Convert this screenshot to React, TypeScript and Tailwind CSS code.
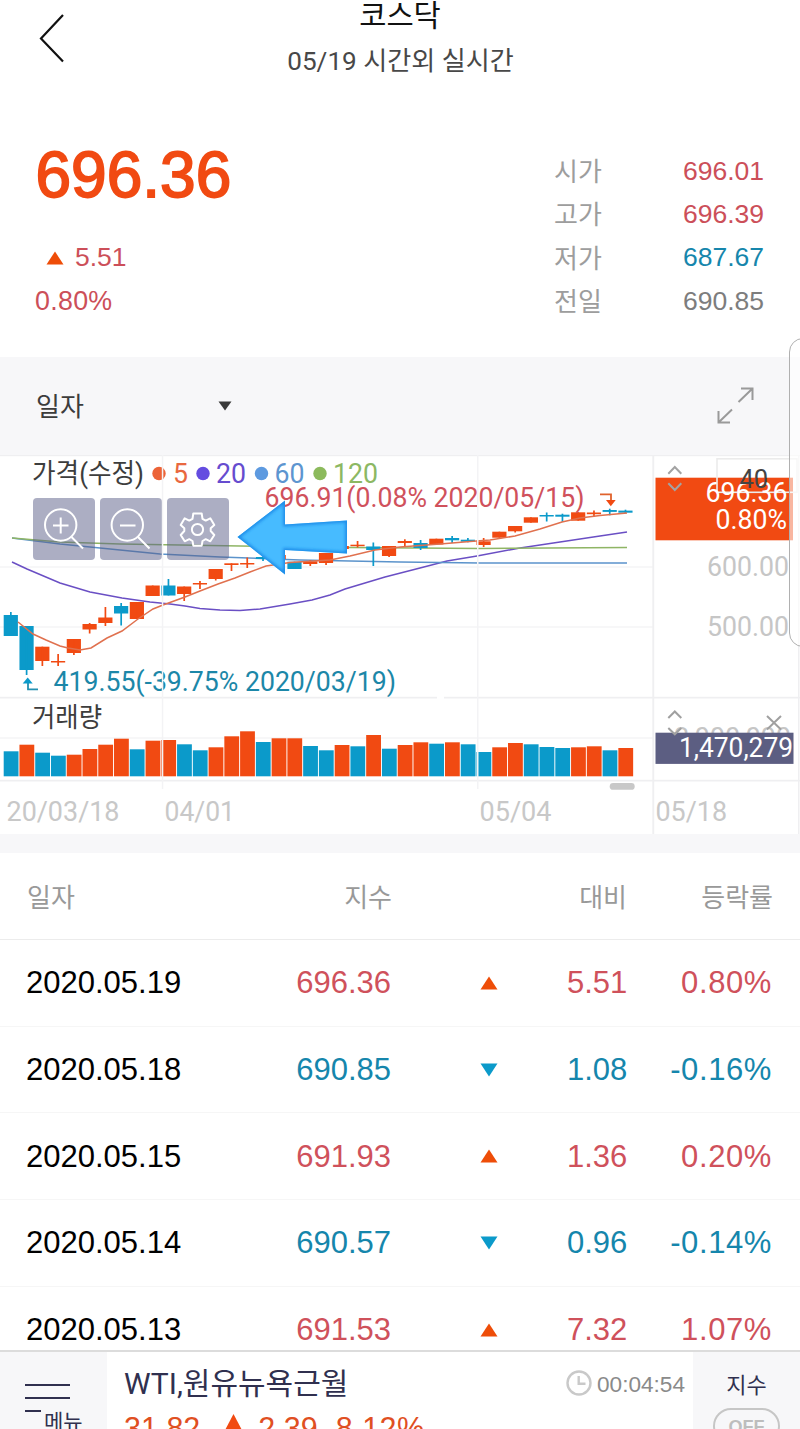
import React from 'react'

const RED = '#f14a12'
const BLUE = '#0b9aca'

type Candle = {
  up: boolean
  top: number
  bottom: number
  high?: number
  low?: number
  vol: number
}

// y values are in page pixels, vol is the top edge of the volume bar
const candles: Candle[] = [
  { up: false, top: 615, bottom: 636, high: 612, vol: 751.3 },
  { up: false, top: 626, bottom: 670, low: 675, vol: 744.7 },
  { up: true, top: 646.7, bottom: 661, low: 666, vol: 752.7 },
  { up: true, top: 661, bottom: 662.5, high: 654, low: 666, vol: 755.7 },
  { up: true, top: 639, bottom: 653, low: 655, vol: 754.7 },
  { up: true, top: 624, bottom: 629.5, high: 623, low: 633.5, vol: 749 },
  { up: true, top: 617.5, bottom: 623, high: 607, low: 626, vol: 744.7 },
  { up: false, top: 606, bottom: 613.5, high: 603, low: 625.5, vol: 738.7 },
  { up: true, top: 602, bottom: 619, vol: 749.3 },
  { up: true, top: 585.5, bottom: 596, vol: 740.7 },
  { up: false, top: 585.5, bottom: 595.5, high: 579, vol: 740 },
  { up: true, top: 586.5, bottom: 594, low: 601, vol: 744.3 },
  { up: true, top: 583, bottom: 584.5, high: 581, low: 589, vol: 750.3 },
  { up: true, top: 569, bottom: 579, low: 580.5, vol: 747.3 },
  { up: true, top: 563.3, bottom: 565, low: 571, vol: 736.3 },
  { up: true, top: 563, bottom: 564.5, high: 557.5, low: 568, vol: 731.3 },
  { up: false, top: 557, bottom: 559, high: 555, low: 561, vol: 742 },
  { up: true, top: 555, bottom: 559, vol: 738.3 },
  { up: false, top: 561.7, bottom: 569, vol: 738.3 },
  { up: true, top: 561.3, bottom: 564, high: 560.3, low: 566, vol: 746 },
  { up: true, top: 553, bottom: 563, low: 565, vol: 750.3 },
  { up: true, top: 546, bottom: 549, vol: 745 },
  { up: true, top: 544.7, bottom: 546.2, high: 541, low: 547.5, vol: 746.3 },
  { up: false, top: 546.5, bottom: 550, high: 542.5, low: 566, vol: 735 },
  { up: true, top: 546, bottom: 556, low: 557, vol: 748.7 },
  { up: true, top: 541, bottom: 543, high: 539.3, low: 546, vol: 745 },
  { up: false, top: 543, bottom: 548, high: 540, low: 550, vol: 742.3 },
  { up: true, top: 538.7, bottom: 544.5, vol: 743.7 },
  { up: false, top: 538, bottom: 540.3, high: 536, low: 543, vol: 742.3 },
  { up: false, top: 539.7, bottom: 541.7, high: 538, low: 542.3, vol: 744.3 },
  { up: true, top: 541.3, bottom: 545, high: 538, low: 547, vol: 752 },
  { up: true, top: 531.7, bottom: 537.7, vol: 747.3 },
  { up: true, top: 526, bottom: 531.3, low: 532.5, vol: 743 },
  { up: true, top: 517.3, bottom: 522.7, vol: 744.3 },
  { up: false, top: 515, bottom: 516.5, high: 512.5, low: 521.5, vol: 747 },
  { up: false, top: 514.7, bottom: 516.7, high: 513.7, low: 522, vol: 748 },
  { up: true, top: 512.3, bottom: 520.7, vol: 747.3 },
  { up: true, top: 512.5, bottom: 514.2, high: 510.5, low: 516.7, vol: 746.3 },
  { up: false, top: 510, bottom: 511.9, high: 508.7, low: 515.3, vol: 750.3 },
  { up: false, top: 510.6, bottom: 512.7, high: 509.7, low: 513.3, vol: 748 },
]

const volumeDown = [0, 2, 3, 8, 11, 12, 16, 19, 20, 22, 24, 27, 29, 30, 33, 34, 35, 38]

const averages = [
  {
    color: '#e0714f',
    points:
      '18,622 33,634 46,640 60,646 68,648 80,650 91,648 107,638 122,631 138,619 153,609 163,605 185,597 200,591 218,584 235,578 250,572 266,566 290,562.5 330,560 350,556 375,550 400,547 440,544 470,541.5 490,540 515,536 540,529 562,522 580,518 600,515.5 627,513',
  },
  {
    color: '#6a4fc4',
    points:
      '12,562 27,569 60,583 90,592 122,598 150,602 170,604 185,606 200,608.5 220,610 240,610.5 260,609 290,604 312,600 330,595 345,589 385,577 420,568 447,561 477,556 520,548 560,542 600,536 627,532',
  },
  {
    color: '#5b93cb',
    points: '12,538 60,544 100,548 160,554 220,557 300,560 400,562 480,563 627,563',
  },
  {
    color: '#8fb565',
    points: '12,538 60,542 120,544 240,546 350,547.5 480,548.5 627,547.5',
  },
]

const quotes = [
  { label: '시가', value: '696.01', color: 'text-[#cc4f59]' },
  { label: '고가', value: '696.39', color: 'text-[#cc4f59]' },
  { label: '저가', value: '687.67', color: 'text-[#1686ac]' },
  { label: '전일', value: '690.85', color: 'text-[#7d7d7d]' },
]

const rows = [
  { date: '2020.05.19', index: '696.36', up: true, diff: '5.51', rate: '0.80%' },
  { date: '2020.05.18', index: '690.85', up: false, diff: '1.08', rate: '-0.16%' },
  { date: '2020.05.15', index: '691.93', up: true, diff: '1.36', rate: '0.20%' },
  { date: '2020.05.14', index: '690.57', up: false, diff: '0.96', rate: '-0.14%' },
  { date: '2020.05.13', index: '691.53', up: true, diff: '7.32', rate: '1.07%' },
]

function Triangle({ up }: { up: boolean }) {
  return (
    <svg width="18" height="14" viewBox="0 0 18 14">
      {up ? <path d="M9 0.5L17.5 13.5H0.5Z" fill="#ee4d08" /> : <path d="M9 13.5L17.5 0.5H0.5Z" fill={BLUE} />}
    </svg>
  )
}

function Header() {
  return (
    <header className="h-[357px] bg-white">
      <div className="grid h-[80px] grid-cols-[100px_600px_100px]">
        <div className="pt-[14px] pl-[39px]">
          <svg width="26" height="49" viewBox="0 0 26 49" fill="none" stroke="#111" strokeWidth="2.2">
            <path d="M24 1L2 24.5L24 47.5" />
          </svg>
        </div>
        <div className="text-center">
          <h1 className="h-8 text-[29.6px] leading-8 text-[#111]">코스닥</h1>
          <p className="mt-[13px] h-8 pl-px text-[26.1px] leading-8 text-[#484848]">05/19 시간외 실시간</p>
        </div>
      </div>

      <div className="flex justify-between pr-[36px] pl-[35px] font-['Liberation_Sans','Noto_Sans_CJK_KR',sans-serif]">
        <div className="pt-[63px]">
          <div className="h-16 pl-[0.5px] text-[64px] leading-16 text-[#f14a12] [-webkit-text-stroke:1.8px_#f14a12]">
            696.36
          </div>
          <div className="mt-[29px] flex h-[43px] items-center pl-[11px] text-[26.5px] text-[#cc4f59]">
            <Triangle up />
            <span className="ml-[11px]">5.51</span>
          </div>
          <div className="h-[43px] text-[26.8px] leading-[45px] tracking-[0.3px] text-[#cc4f59]">0.80%</div>
        </div>
        <dl className="w-[210px] pt-[70px]">
          {quotes.map((q) => (
            <div key={q.label} className="flex h-[43.3px] items-center justify-between text-[26.5px]">
              <dt className="pt-[2px] text-[26px] text-[#9d9d9d]">{q.label}</dt>
              <dd className={q.color}>{q.value}</dd>
            </div>
          ))}
        </dl>
      </div>
    </header>
  )
}

function Toolbar() {
  return (
    <div className="flex h-[98px] items-center justify-between bg-[#f7f7f9] pr-[46px] pl-[36px]">
      <div className="flex w-[196px] items-center justify-between">
        <span className="pt-[2px] text-[26px] leading-8 text-[#3c3c3c]">일자</span>
        <svg width="14" height="10" viewBox="0 0 14 10">
          <path d="M0.5 0.5H13.5L7 9.5Z" fill="#3a3a3a" />
        </svg>
      </div>
      <svg className="-mt-[2px]" width="37" height="37" viewBox="0 0 37 37" fill="none" stroke="#9a9a9a" strokeWidth="2">
        <path d="M21.5 15L35.5 1.5M24 1.5H35.5V13" />
        <path d="M15 22.5L1.5 35.5M1.5 24V35.5H13" />
      </svg>
    </div>
  )
}

interface LabelProps {
  x: number
  y: number
  w: number
  fill: string
  children: string
}

function Label({ x, y, w, fill, children }: LabelProps) {
  return (
    <text x={x} y={y} textLength={w} lengthAdjust="spacingAndGlyphs" fontSize="27" fill={fill}>
      {children}
    </text>
  )
}

function ZoomButtons() {
  return (
    <div className="absolute top-[43px] left-[33px] flex gap-[5px]">
      <button className="h-[62px] w-[62px] rounded-[4px] bg-[#5a5e87]/50">
        <svg width="62" height="62" viewBox="0 0 62 62" fill="none" stroke="#fff" strokeWidth="2">
          <circle cx="27.7" cy="27" r="15.7" />
          <path d="M20 27.5H35.5M27.7 19.5V35.5M38.5 39L50 50.5" />
        </svg>
      </button>
      <button className="h-[62px] w-[62px] rounded-[4px] bg-[#5a5e87]/50">
        <svg width="62" height="62" viewBox="0 0 62 62" fill="none" stroke="#fff" strokeWidth="2">
          <circle cx="27.3" cy="27" r="15.7" />
          <path d="M20 27.5H35.5M38 39L49.5 50.5" />
        </svg>
      </button>
      <button className="h-[62px] w-[62px] rounded-[4px] bg-[#5a5e87]/50">
        <svg width="62" height="62" viewBox="0 0 62 62" fill="none" stroke="#fff" strokeWidth="2" strokeLinejoin="round">
          <circle cx="30.5" cy="31.5" r="5.6" />
          <path d="M26.3 15.5H34.7L35.5 20.8L38.7 22.6L43.3 20.3L47.3 27L43.7 30.2V33L47.3 37L43.3 43.3L38.7 41.2L35.5 43L34.7 47.7H26.3L25.5 43L22.3 41.2L17.7 43.3L13.7 37L17.3 33V30.2L13.7 27L17.7 20.3L22.3 22.6L25.5 20.8Z" />
        </svg>
      </button>
    </div>
  )
}

function Chart() {
  return (
    <section className="relative h-[379px] bg-white">
      <svg
        className="block font-['Roboto','Noto_Sans_CJK_KR',sans-serif]"
        width="800"
        height="379"
        viewBox="0 455 800 379"
      >
        <defs>
          <clipPath id="pointer">
            <path d="M237.5 537L285 500.5V524.5L347 520.5V553.5L285 550V574.5Z" />
          </clipPath>
          <filter id="soft" x="-20%" y="-20%" width="140%" height="140%">
            <feGaussianBlur stdDeviation="1.8" />
          </filter>
        </defs>

        {/* horizontal grid */}
        <g fill="#f4f4f5">
          <rect x="0" y="566.3" width="653" height="1.4" />
          <rect x="0" y="626.3" width="653" height="1.4" />
          <rect x="0" y="737.3" width="653" height="1.4" />
        </g>

        {/* moving averages */}
        {averages.slice(1).map((a) => (
          <polyline key={a.color} points={a.points} fill="none" stroke={a.color} strokeWidth="1.5" />
        ))}

        {/* candles */}
        {candles.map((c, i) => {
          const x = 3.7 + i * 15.76
          const fill = c.up ? RED : BLUE
          const high = c.high ?? c.top
          const low = c.low ?? c.bottom
          return (
            <g key={i} fill={fill}>
              <rect x={x} y={c.top} width="14.2" height={c.bottom - c.top} />
              <rect x={x + 6.3} y={high} width="1.7" height={low - high} />
            </g>
          )
        })}
        <polyline points={averages[0].points} fill="none" stroke={averages[0].color} strokeWidth="1.5" />

        {/* volume */}
        {candles.map((c, i) => (
          <rect
            key={i}
            x={3.7 + i * 15.76}
            y={c.vol}
            width="14.8"
            height={776.3 - c.vol}
            fill={volumeDown.includes(i) ? BLUE : RED}
          />
        ))}

        {/* legend */}
        <Label x={32} y={482.5} w={112} fill="#3d3d3d">가격(수정)</Label>
        <circle cx="159" cy="473.5" r="6.7" fill="#ec6337" />
        <Label x={173} y={482.5} w={15} fill="#e9683f">5</Label>
        <circle cx="203" cy="473.5" r="6.7" fill="#644ce0" />
        <Label x={216} y={482.5} w={30} fill="#664ccf">20</Label>
        <circle cx="261.5" cy="473.5" r="6.7" fill="#5d9ae0" />
        <Label x={274.5} y={482.5} w={30} fill="#5d95d0">60</Label>
        <circle cx="320" cy="473.5" r="6.7" fill="#8cba5c" />
        <Label x={333} y={482.5} w={45} fill="#8cb863">120</Label>

        {/* high / low marks */}
        <Label x={264.5} y={506.7} w={320} fill="#d0515c">696.91(0.08% 2020/05/15)</Label>
        <path d="M600 494.3H611V501" fill="none" stroke="#e0622c" strokeWidth="1.8" />
        <path d="M606 500H615.7L610.8 506.3Z" fill={RED} />
        <Label x={53.5} y={690.5} w={342.5} fill="#1c87a8">419.55(-39.75% 2020/03/19)</Label>
        <path d="M28 682V689.3H38" fill="none" stroke="#2490b0" strokeWidth="1.8" />
        <path d="M22.7 683.5H32.7L27.7 677.5Z" fill={BLUE} />
        <Label x={32} y={727} w={70} fill="#3d3d3d">거래량</Label>

        {/* price axis */}
        <Label x={707} y={576} w={82} fill="#c6c6c6">600.00</Label>
        <Label x={707} y={636} w={82} fill="#c6c6c6">500.00</Label>
        <rect x="655.5" y="477.7" width="137.5" height="62.6" fill={RED} />
        <rect x="717" y="458.8" width="80" height="33.5" fill="none" stroke="#ebebeb" strokeWidth="1.6" />
        <Label x={705.5} y={502} w={82} fill="#fff">696.36</Label>
        <Label x={715.5} y={529.2} w={71.5} fill="#fff">0.80%</Label>
        <text x="739.5" y="488" fontSize="25.5" fill="#444">40</text>
        <g fill="none" stroke="#a3a3a3" strokeWidth="2">
          <path d="M668.3 473.7L674.8 467L681.3 473.7" />
          <path d="M668.3 483.3L674.8 490L681.3 483.3" />
        </g>

        {/* volume axis */}
        <Label x={674} y={746.5} w={117} fill="#c6c6c6">2,000,000</Label>
        <rect x="655.5" y="732.7" width="138" height="31.2" fill="#5c5e82" />
        <Label x={679} y={757.2} w={114} fill="#fff">1,470,279</Label>
        <g fill="none" stroke="#a0a0a0" strokeWidth="2">
          <path d="M668.3 718L674.8 711.5L681.3 718" />
          <path d="M668.3 728L674.8 734.3L681.3 728" />
          <path d="M767 716L781 729.5M781 716L767 729.5" />
        </g>

        {/* dates */}
        <Label x={6.5} y={820.7} w={113} fill="#c8c8c8">20/03/18</Label>
        <Label x={164.5} y={820.7} w={70.5} fill="#c8c8c8">04/01</Label>
        <Label x={479.5} y={820.7} w={72} fill="#c8c8c8">05/04</Label>
        <Label x={655.5} y={820.7} w={71.5} fill="#c8c8c8">05/18</Label>
        <rect x="609.7" y="783" width="25" height="6.8" rx="3.4" fill="#c8c8c8" />

        {/* frame lines */}
        <g fill="#efeff1">
          <rect x="0" y="455" width="800" height="1.2" />
          <rect x="0" y="696.8" width="437" height="1.7" />
          <rect x="444" y="696.8" width="356" height="1.7" />
          <rect x="0" y="779.8" width="800" height="1.7" />
          <rect x="652.3" y="455" width="1.9" height="379" />
          <rect x="798" y="455" width="1.5" height="379" />
        </g>
      </svg>

      <ZoomButtons />

      {/* pointer and the vertical guides run over the buttons */}
      <svg className="pointer-events-none absolute top-0 left-0" width="652" height="379" viewBox="0 455 652 379">
        <g fill="#f3f3f5">
          <rect x="161.8" y="455" width="1.5" height="334" />
          <rect x="477" y="455" width="1.5" height="334" />
        </g>
        <g clipPath="url(#pointer)">
          <rect x="235" y="498" width="115" height="80" fill="#47bbff" />
          <path
            d="M237.5 537L285 500.5V524.5L347 520.5V553.5L285 550V574.5Z"
            fill="none"
            stroke="#1a8be8"
            strokeWidth="3.6"
            filter="url(#soft)"
          />
        </g>
      </svg>
    </section>
  )
}

function PriceTable() {
  const cols = 'grid grid-cols-[200px_191px_176px_60px_145px] items-center'
  return (
    <section className="h-[497px] overflow-hidden bg-white font-['Liberation_Sans','Noto_Sans_CJK_KR',sans-serif]">
      <div className={`${cols} h-[87px] border-b border-[#ececec] pt-[4px] text-[26px] text-[#999]`}>
        <span className="pl-[27px]">일자</span>
        <span className="-mr-px text-right">지수</span>
        <span />
        <span className="text-right whitespace-nowrap">대비</span>
        <span className="-mr-px text-right">등락률</span>
      </div>
      {rows.map((row) => (
        <div
          key={row.date}
          className={`${cols} h-[86.7px] border-b border-[#f6f6f6] text-[31px] leading-9 ${row.up ? 'text-[#cf515b]' : 'text-[#1586ac]'}`}
        >
          <span className="pt-px pl-[26px] text-black">{row.date}</span>
          <span className="pt-px text-right">{row.index}</span>
          <span className="flex justify-center pl-[20px]">
            <Triangle up={row.up} />
          </span>
          <span className="pt-px text-right">{row.diff}</span>
          <span className="pt-px text-right tracking-[0.6px]">{row.rate}</span>
        </div>
      ))}
    </section>
  )
}

function BottomBar() {
  return (
    <footer className="flex h-[79px] overflow-hidden border-t-2 border-[#dcdcdc] bg-white text-[#30304f]">
      <div className="flex w-[107px] shrink-0 flex-col bg-[#f7f7f9] pt-[32px] pl-[25px]">
        <span className="h-[2px] w-[45px] shrink-0 bg-[#30304f]" />
        <span className="mt-[11px] h-[2px] w-[45px] shrink-0 bg-[#30304f]" />
        <div className="mt-[11px] flex h-6 shrink-0">
          <span className="h-[2px] w-[16px] bg-[#30304f]" />
          <span className="ml-[3px] text-[21px] leading-6">메뉴</span>
        </div>
      </div>
      <div className="w-[586px] shrink-0 pr-[8px] pl-[17px]">
        <div className="flex h-[60px] items-center justify-between pt-[3px]">
          <span className="text-[30px] leading-10">WTI,원유뉴욕근월</span>
          <span className="flex items-center gap-[5px] font-['Liberation_Sans',sans-serif] text-[22.6px] text-[#8a8a8a]">
            <svg width="26" height="26" viewBox="0 0 26 26" fill="none" stroke="#c9c9c9" strokeWidth="2.4">
              <circle cx="13" cy="13" r="11.5" />
              <path d="M12.7 6V13.7H19.5" />
            </svg>
            <span className="pt-[2px]">00:04:54</span>
          </span>
        </div>
        <div className="flex items-start font-['Liberation_Sans',sans-serif] text-[30.5px] leading-8 whitespace-nowrap text-[#e04f22]">
          <span>31.82</span>
          <svg className="mt-[2px] mr-[14px] ml-[23px]" width="21" height="20" viewBox="0 0 21 20">
            <path d="M10.5 0L21 20H0Z" fill={RED} />
          </svg>
          <span>2.39</span>
          <span className="ml-[18px] tracking-[0.5px]">8.12%</span>
        </div>
      </div>
      <div className="flex w-[107px] shrink-0 flex-col items-center bg-[#f7f7f9] pt-[18px]">
        <span className="text-[22px] leading-8">지수</span>
        <span className="mt-[6px] h-[36px] w-[67px] shrink-0 rounded-full border-2 border-[#c6c6c6] text-center font-['Liberation_Sans',sans-serif] text-[18px] leading-[34px] font-bold text-[#bdbdbd]">
          OFF
        </span>
      </div>
    </footer>
  )
}

export default function App() {
  return (
    <div className="relative h-[1429px] w-[800px] overflow-hidden bg-white font-['Roboto','Noto_Sans_CJK_KR',sans-serif]">
      <Header />
      <Toolbar />
      <Chart />
      <div className="h-[19px] bg-[#f7f7f9]" />
      <PriceTable />
      <BottomBar />

      {/* edge panel handle */}
      <div className="absolute top-[338px] left-[789px] h-[309px] w-[30px] rounded-[14px] border-[1.5px] border-[#b0b0b0] bg-white/60" />
    </div>
  )
}
